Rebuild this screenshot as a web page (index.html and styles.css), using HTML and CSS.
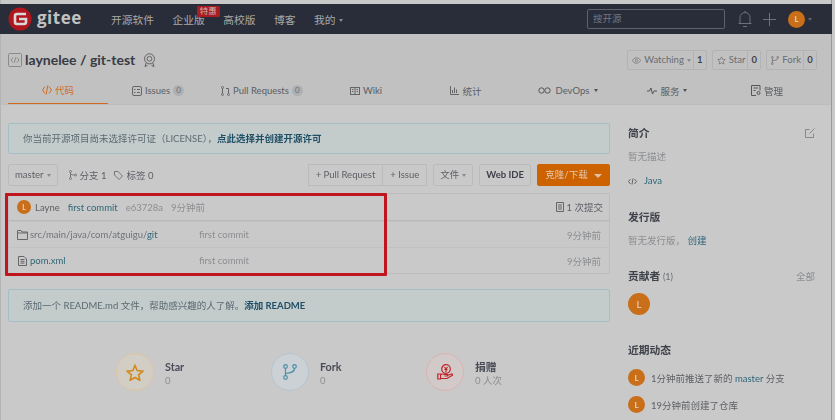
FILE: index.html
```html
<!DOCTYPE html>
<html>
  <head>
    <meta charset="UTF-8" />
    <title>laynelee / git-test</title>
    <link rel="stylesheet" href="styles.css">
  </head>

  <body>
    <div class="page">
      <div class="nav">
        <div class="logo">
          <svg width="24" height="24" viewBox="0 0 24 24">
            <circle cx="12" cy="12" r="11.500" fill="#b0161d" />
            <path d="M18 7H9a2 2 0 0 0-2 2v6a2 2 0 0 0 2 2h7a2 2 0 0 0 2-2v-3h-7" fill="none" stroke="#d8d8d8" stroke-width="2.600" />
          </svg>
          <span class="logo-text">gitee</span>
        </div>
        <div class="nav-links">
          <span>开源软件</span>
          <span class="nav-ent">企业版<em class="badge">特惠</em></span>
          <span>高校版</span>
          <span>博客</span>
          <span>我的<i class="caret"></i></span>
        </div>
        <div class="nav-right">
          <div class="search">搜开源</div>
          <svg width="14" height="18" viewBox="0 0 14 18" fill="none" stroke="#6d7079">
            <path d="M2 13V7.500a5 5 0 0 1 10 0V13M.5 13.500h13M5 16.500h4M7 1v1.500" />
          </svg>
          <svg class="plus" width="13" height="13" viewBox="0 0 13 13" stroke="#6d7079"><path d="M6.500 0v13M0 6.500h13" /></svg>
          <span class="avatar nav-avatar">L</span><i class="caret caret-dim"></i>
        </div>
      </div>

      <div class="repo-head">
        <div class="title-row">
          <svg width="14" height="14" viewBox="0 0 14 14" fill="none" stroke="#8a8a8a">
            <rect x="0.500" y="0.500" width="13" height="13" rx="1" />
            <path d="M5 4.500 3 7l2 2.500M9 4.500 11 7 9 9.500M7.800 4.200 6.200 9.800" />
          </svg>
          <h1>laynelee / git-test</h1>
          <svg class="medal" width="13" height="14" viewBox="0 0 13 14" fill="none" stroke="#666">
            <circle cx="6.500" cy="5.800" r="5" />
            <circle cx="6.500" cy="5.800" r="2.400" />
            <path d="M3 10l-1 3.500 2-.8 1-1M10 10l1 3.500-2-.8-1-1" />
          </svg>
          <div class="repo-actions">
            <div class="act">
              <span class="act-label">
                <svg width="9" height="7" viewBox="0 0 11 8" fill="none" stroke="#777"><path d="M.5 4c2.500-4.500 7.500-4.500 10 0-2.500 4.500-7.500 4.500-10 0z" /><circle cx="5.500" cy="4" r="1.500" /></svg>
                Watching<i class="caret"></i>
              </span>
              <span class="act-num">1</span>
            </div>
            <div class="act">
              <span class="act-label">
                <svg width="9" height="9" viewBox="0 0 24 24" fill="none" stroke="#777" stroke-width="2.200"><path d="M12 2.500l3 6.300 6.900.9-5 4.800 1.200 6.900-6.100-3.300-6.100 3.300 1.200-6.900-5-4.800 6.900-.9z" /></svg>
                Star
              </span>
              <span class="act-num">0</span>
            </div>
            <div class="act">
              <span class="act-label">
                <svg width="8" height="9" viewBox="0 0 9 10" fill="none" stroke="#777"><circle cx="1.500" cy="1.500" r="1" /><circle cx="7.500" cy="1.500" r="1" /><circle cx="1.500" cy="8.500" r="1" /><path d="M1.500 2.500v5M7.500 2.500c0 2-3 2.500-6 2.500" /></svg>
                Fork
              </span>
              <span class="act-num">0</span>
            </div>
          </div>
        </div>
        <div class="tabs">
          <span class="tab tab-on">
            <svg width="10" height="10" viewBox="0 0 10 10" fill="none" stroke="#d2691c"><path d="M3 1.500 .5 5 3 8.500M7 1.500 9.500 5 7 8.500M5.800 .5 4.200 9.500" /></svg>
            代码
          </span>
          <span class="tab">
            <svg width="10" height="10" viewBox="0 0 10 10" fill="none" stroke="#666"><rect x=".5" y=".5" width="9" height="9" rx="1.500" /><path d="M2 3.500h1.500M5 3.500h3M2 6.500h1.500M5 6.500h3" /></svg>
            Issues <b class="count">0</b>
          </span>
          <span class="tab tab-pr">
            <svg width="9" height="10" viewBox="0 0 9 10" fill="none" stroke="#666"><circle cx="1.500" cy="1.500" r="1" /><circle cx="1.500" cy="8.500" r="1" /><circle cx="7.500" cy="8.500" r="1" /><path d="M1.500 2.500v5M7.500 7.500V2.500H5" /></svg>
            Pull Requests <b class="count">0</b>
          </span>
          <span class="tab">
            <svg width="10" height="8" viewBox="0 0 10 8" fill="none" stroke="#666"><rect x=".5" y=".5" width="9" height="7" /><path d="M5 .5v7M2 2.500h1.500M2 4.500h1.500M6.500 2.500H8M6.500 4.500H8" /></svg>
            Wiki
          </span>
          <span class="tab">
            <svg width="9" height="9" viewBox="0 0 9 9" fill="none" stroke="#666"><path d="M.5 0v8.500H9M2.500 7V4M4.500 7V1.500M6.500 7V3.500" /></svg>
            统计
          </span>
          <span class="tab tab-devops">
            <svg width="13" height="7" viewBox="0 0 13 7" fill="none" stroke="#555"><circle cx="3.500" cy="3.500" r="2.700" /><circle cx="9.500" cy="3.500" r="2.700" /></svg>
            DevOps<i class="caret caret-dark"></i>
          </span>
          <span class="tab tab-service">
            <svg width="10" height="8" viewBox="0 0 10 8" fill="none" stroke="#555"><path d="M0 4h2.500L4 1l1.500 6L7 4h3" /></svg>
            服务<i class="caret caret-dark"></i>
          </span>
          <span class="tab tab-manage">
            <svg width="10" height="11" viewBox="0 0 10 11" fill="none" stroke="#555"><path d="M9 5.500V.5H.5v10H5M2.500 3h4.500M2.500 5.500h2" /><circle cx="7.500" cy="8" r="1.500" /></svg>
            管理
          </span>
        </div>
      </div>

      <div class="main">
        <div class="content">
          <div class="notice">你当前开源项目尚未选择许可证（LICENSE），<b>点此选择并创建开源许可</b></div>

          <div class="toolbar">
            <span class="btn">master<i class="caret"></i></span>
            <span class="meta">
              <svg width="8" height="10" viewBox="0 0 8 10" fill="none" stroke="#777"><circle cx="1.500" cy="1.500" r="1" /><circle cx="1.500" cy="8.500" r="1" /><circle cx="6.500" cy="5" r="1" /><path d="M1.500 2.500v5M1.500 3.500C2 5 4 5 5.500 5" /></svg>
              分支 1
            </span>
            <span class="meta meta-next">
              <svg width="9" height="9" viewBox="0 0 9 9" fill="none" stroke="#777"><path d="M.5.500h3.500l4.500 4.500-3.500 3.500L.5 4z" /></svg>
              标签 0
            </span>
            <span class="toolbar-gap"></span>
            <span class="btn-group">
              <span class="btn">+ Pull Request</span>
              <span class="btn">+ Issue</span>
            </span>
            <span class="btn">文件<i class="caret"></i></span>
            <span class="btn btn-strong">Web IDE</span>
            <span class="btn btn-orange">克隆/下载<i class="caret caret-light"></i></span>
          </div>

          <div class="files">
            <div class="row row-head">
              <span class="avatar avatar-sm">L</span>
              <span class="author">Layne</span>
              <span class="link">first commit</span>
              <span class="muted">e63728a</span>
              <span class="muted">9分钟前</span>
              <span class="commits">
                <svg width="8" height="10" viewBox="0 0 8 10" fill="none" stroke="#666"><path d="M.5.500h7v9h-7zM2 3h4M2 5h4M2 7h4" /></svg>
                1 次提交
              </span>
            </div>
            <div class="row">
              <svg class="file-icon" width="11" height="10" viewBox="0 0 11 10" fill="none" stroke="#666"><path d="M.5 9.500V.5h3.500l1 1.500h5.500v7.500zM.5 3h10" /></svg>
              <span class="file-name"><span class="path">src/main/java/com/atguigu/</span><span class="link">git</span></span>
              <span class="muted file-msg">first commit</span>
              <span class="muted file-time">9分钟前</span>
            </div>
            <div class="row">
              <svg class="file-icon file-doc" width="9" height="10" viewBox="0 0 9 10" fill="none" stroke="#666"><path d="M.5.500h5.500l2.500 2.500v6.500h-8zM2.500 3.500h4M2.500 5.300h4M2.500 7.100h4" /></svg>
              <span class="file-name"><span class="link">pom.xml</span></span>
              <span class="muted file-msg">first commit</span>
              <span class="muted file-time">9分钟前</span>
            </div>
          </div>

          <div class="notice notice-readme">添加一个 README.md 文件，帮助感兴趣的人了解。<b>添加 README</b></div>

          <div class="stats">
            <div class="stat">
              <span class="ring ring-star">
                <svg width="18" height="17" viewBox="0 0 24 23" fill="none" stroke="#d18a1e" stroke-width="2.200"><path d="M12 2l3 6.900 7.500.8-5.600 5 1.600 7.300-6.500-3.800L5.500 22l1.600-7.300-5.600-5 7.500-.8z" /></svg>
              </span>
              <span class="stat-text"><b>Star</b><span>0</span></span>
            </div>
            <div class="stat">
              <span class="ring ring-fork">
                <svg width="14" height="16" viewBox="0 0 14 16" fill="none" stroke="#4d8ea8" stroke-width="1.200"><circle cx="2.500" cy="2.500" r="1.800" /><circle cx="11.500" cy="2.500" r="1.800" /><circle cx="2.500" cy="13.500" r="1.800" /><path d="M2.500 4.300v7.400M11.500 4.300c0 4-4 4.700-9 5.200" /></svg>
              </span>
              <span class="stat-text"><b>Fork</b><span>0</span></span>
            </div>
            <div class="stat">
              <span class="ring ring-gift">
                <svg width="16" height="16" viewBox="0 0 16 16" fill="none" stroke="#c0252b" stroke-width="1.200"><circle cx="9" cy="5" r="4.300" /><path d="M7.500 3l1.500 2 1.500-2M7.500 5.500h3M9 5v3M.8 10h2.800v5H.8zM3.600 10.500c2-1 3-.5 4.500 0h2c1 0 1 1.500 0 1.500H7.500M10 11.500l4.500-1.500c1-.3 1.500 1 .5 1.500L10 14.500H3.600" /></svg>
              </span>
              <span class="stat-text"><b>捐赠</b><span>0 人次</span></span>
            </div>
          </div>
        </div>

        <div class="side">
          <div class="side-head side-first">
            简介
            <svg width="10" height="10" viewBox="0 0 10 10" fill="none" stroke="#888"><path d="M8.500 5.500v4H.5V1.500h4M4.500 5.500 9.500.5" /></svg>
          </div>
          <div class="side-line muted">暂无描述</div>
          <div class="side-line side-lang">
            <svg width="9" height="7" viewBox="0 0 9 7" fill="none" stroke="#666"><path d="M2.500 1 .5 3.500l2 2.500M6.500 1l2 2.500-2 2.500M5 .5 4 6.500" /></svg>
            <span class="link">Java</span>
          </div>
          <div class="side-head side-release">发行版</div>
          <div class="side-line muted">暂无发行版， <span class="link">创建</span></div>
          <div class="side-head side-contrib">
            <span>贡献者 <small>(1)</small></span>
            <span class="all">全部</span>
          </div>
          <span class="avatar avatar-lg">L</span>
          <div class="side-head side-activity">近期动态</div>
          <div class="event"><span class="avatar avatar-md">L</span><span>1分钟前推送了新的 <span class="link">master</span> 分支</span></div>
          <div class="event"><span class="avatar avatar-md">L</span><span>19分钟前创建了仓库</span></div>
        </div>
      </div>

      <div class="red-box"></div>
    </div>
  </body>
</html>
```

FILE: styles.css
```css
html,
body {
  margin: 0;
  padding: 0;
  height: 100%;
  overflow: hidden;
  background: #c9c9c9;
}

.page {
  position: relative;
  height: 420px;
  box-sizing: border-box;
  padding-top: 4px;
  margin-right: 3px;
  border-left: 1px solid #b4b4b4;
  border-right: 1px solid #9a9a9a;
  font-family: Lato, "Noto Sans CJK SC", sans-serif;
  font-size: 9.500px;
  color: #4d5058;
  filter: blur(0.4px);
}

svg {
  flex: none;
}

.nav {
  display: flex;
  align-items: center;
  height: 30px;
  margin-left: -1px;
  margin-right: -1px;
  padding-left: 8px;
  background: #282d39;
  color: #a9a9a9;
}

.logo {
  display: flex;
  align-items: center;
  gap: 5px;
  width: 103px;
}

.logo-text {
  font-family: "Open Sans", sans-serif;
  font-size: 17px;
  font-weight: 700;
  letter-spacing: 0.500px;
  color: #c2c2c2;
  line-height: 24px;
  margin-top: -3px;
}

.nav-links {
  display: flex;
  gap: 18.500px;
  font-size: 10.750px;
}

.nav-ent {
  position: relative;
}

.badge {
  position: absolute;
  top: -6px;
  right: -15px;
  padding: 0 3px;
  background: #a81c22;
  border-radius: 1px;
  color: #c9b3b3;
  font-size: 8.500px;
  font-style: normal;
  line-height: 11px;
}

.nav-right {
  display: flex;
  align-items: center;
  margin-left: auto;
  margin-right: 20px;
}

.search {
  width: 131px;
  height: 18px;
  margin-right: 13px;
  padding-left: 5px;
  border: 1px solid #5e626c;
  border-radius: 2px;
  color: #74777f;
  font-size: 9.500px;
  line-height: 18px;
}

.plus {
  margin: 0 12px 0 11px;
}

.caret {
  display: inline-block;
  margin-left: 3px;
  vertical-align: middle;
  border-top: 3px solid #8a8a8a;
  border-left: 2.500px solid transparent;
  border-right: 2.500px solid transparent;
}

.caret-dim {
  border-top-color: #5f636c;
}

.caret-dark {
  border-top-color: #4d5058;
}

.caret-light {
  margin-left: 6px;
  border-top: 4px solid #e2c2a6;
  border-left: 4px solid transparent;
  border-right: 4px solid transparent;
}

.avatar {
  display: inline-flex;
  align-items: center;
  justify-content: center;
  flex: none;
  border-radius: 50%;
  background: #c96f1a;
  color: #e6d3c0;
  font-weight: 700;
}

.nav-avatar {
  width: 17px;
  height: 17px;
  font-size: 8px;
}

.repo-head {
  background: #c1c1c1;
  padding: 0 7px;
  border-bottom: 1px solid #bcbcbc;
  height: 71px;
  box-sizing: border-box;
}

.title-row {
  display: flex;
  align-items: center;
  height: 43px;
  padding-top: 8px;
  box-sizing: border-box;
}

.title-row h1 {
  margin: 0 8px 0 3px;
  font-size: 14px;
  font-weight: 700;
  color: #373b45;
}

.medal {
  margin-top: 1px;
}

.repo-actions {
  display: flex;
  gap: 5px;
  margin-left: auto;
  margin-right: 7px;
  margin-top: 1px;
}

.act {
  display: flex;
  height: 18px;
  border: 1px solid #b3b3b3;
  border-radius: 2px;
  color: #6a6c72;
  line-height: 18px;
}

.act-label {
  display: flex;
  align-items: center;
  gap: 3px;
  padding: 0 2px 0 4px;
}

.act-label .caret {
  margin-left: 0;
}

.act-num {
  width: 12px;
  text-align: center;
  border-left: 1px solid #b3b3b3;
  font-weight: 700;
  color: #3f424a;
}

.tabs {
  display: flex;
}

.tab {
  flex: none;
  width: 100px;
  display: flex;
  align-items: center;
  justify-content: center;
  gap: 3px;
  height: 27px;
  box-sizing: border-box;
  color: #5a5d64;
}

.tab-on {
  color: #d2691c;
  border-bottom: 1px solid #d2691c;
}

.tab-pr {
  width: 108px;
}

.tab-devops {
  width: 104px;
  gap: 5px;
}

.tab-service {
  width: 94px;
}

.tab-manage {
  width: 106px;
}

.tab .caret {
  margin-left: 0;
}

.count {
  display: inline-block;
  width: 11px;
  height: 11px;
  border-radius: 50%;
  background: #adb0b3;
  color: #686b72;
  font-size: 8px;
  line-height: 11px;
  text-align: center;
  font-weight: 400;
}

.main {
  display: flex;
  gap: 18px;
  padding-left: 7px;
}

.content {
  width: 602px;
  flex: none;
}

.notice {
  height: 31px;
  box-sizing: border-box;
  margin-top: 18px;
  padding-left: 14px;
  background: #c3cbcb;
  border: 1px solid #a4bec6;
  border-radius: 2px;
  color: #5b6a72;
  line-height: 29px;
}

.notice b {
  color: #1f4f66;
}

.notice-readme {
  height: 33px;
  margin-top: 15px;
  line-height: 31px;
}

.toolbar {
  display: flex;
  align-items: center;
  gap: 5px;
  margin-top: 10px;
}

.btn {
  display: inline-block;
  height: 22px;
  box-sizing: border-box;
  padding: 0 6px;
  border: 1px solid #bbb;
  border-radius: 2px;
  color: #5d5f65;
  line-height: 20px;
  white-space: nowrap;
}

.btn-strong {
  font-weight: 700;
  color: #3f424a;
  margin-left: 1px;
}

.btn-orange {
  width: 73px;
  padding: 0;
  margin-left: 1px;
  background: #cd6200;
  border-color: #cd6200;
  color: #e3c8ae;
  text-align: center;
}

.btn-group {
  display: flex;
  margin-right: 1px;
}

.btn-group .btn {
  padding: 0 7px;
  border-radius: 0;
}

.btn-group .btn + .btn {
  border-left: 0;
}

.meta {
  display: inline-flex;
  align-items: center;
  gap: 3px;
  margin-left: 6px;
  color: #5d5f65;
}

.meta-next {
  margin-left: 3px;
}

.toolbar-gap {
  flex: 1;
}

.files {
  margin-top: 7px;
  border: 1px solid #bdbdbd;
  border-radius: 2px;
}

.row {
  display: flex;
  align-items: center;
  height: 26px;
  padding: 0 8px;
  border-top: 1px solid #c2c2c2;
  box-sizing: border-box;
}

.row-head {
  height: 27px;
  border-top: 0;
  gap: 8px;
  padding-right: 6px;
  border-bottom: 1px solid #b9b9b9;
}

.avatar-sm {
  width: 14px;
  height: 14px;
  margin-right: -4px;
  font-size: 7px;
}

.author {
  color: #5d5f65;
}

.link {
  color: #2e6677;
}

.muted {
  color: #8c8e92;
}

.commits {
  display: flex;
  align-items: center;
  gap: 3px;
  margin-left: auto;
  color: #5d5f65;
}

.file-icon {
  margin-right: 2px;
}

.file-doc {
  margin-left: 1px;
  margin-right: 3px;
}

.file-name {
  width: 169px;
}

.path {
  color: #707279;
}

.file-msg {
  flex: 1;
}

.stats {
  display: flex;
  margin-top: 31px;
  padding-left: 108px;
}

.stat {
  display: flex;
  align-items: center;
  gap: 11px;
  width: 155px;
}

.ring {
  display: flex;
  align-items: center;
  justify-content: center;
  width: 38px;
  height: 38px;
  box-sizing: border-box;
  border-radius: 50%;
  border: 1px solid;
}

.ring-star {
  background: #d2cdc5;
  border-color: #dcc49f;
}

.ring-fork {
  background: #ccd1d5;
  border-color: #b3c4cf;
}

.ring-gift {
  background: #d2c9c9;
  border-color: #dbb1b1;
}

.stat-text {
  display: flex;
  flex-direction: column;
  margin-top: 3px;
  color: #8c8e92;
  line-height: 14px;
}

.stat-text b {
  color: #4a4d58;
  font-size: 10.750px;
  font-weight: 700;
}

.side {
  width: 187px;
  flex: none;
}

.side-head {
  display: flex;
  justify-content: space-between;
  align-items: center;
  color: #3f424a;
  font-size: 10.750px;
  font-weight: 700;
  line-height: 16px;
}

.side-first {
  margin-top: 20px;
}

.side-line {
  line-height: 16px;
  margin-top: 8px;
}

.side-lang {
  display: flex;
  align-items: center;
  gap: 7px;
}

.side-release {
  margin-top: 20px;
}

.side-contrib {
  margin-top: 19px;
}

.side-contrib small {
  font-size: 9px;
  font-weight: 400;
  color: #6a6c72;
}

.all {
  font-size: 9.500px;
  font-weight: 400;
  color: #8c8e92;
}

.avatar-lg {
  width: 22px;
  height: 22px;
  margin-top: 8px;
  font-size: 10px;
  font-weight: 400;
}

.side-activity {
  margin-top: 27px;
}

.event {
  display: flex;
  align-items: center;
  gap: 6px;
  height: 17px;
  margin-top: 10px;
  color: #5d5f65;
}

.side-activity + .event {
  margin-top: 11px;
}

.avatar-md {
  width: 17px;
  height: 17px;
  font-size: 8px;
}

.red-box {
  position: absolute;
  left: 4px;
  top: 193px;
  width: 376px;
  height: 77px;
  border: 3px solid #c0141e;
  border-radius: 1px;
}
```
